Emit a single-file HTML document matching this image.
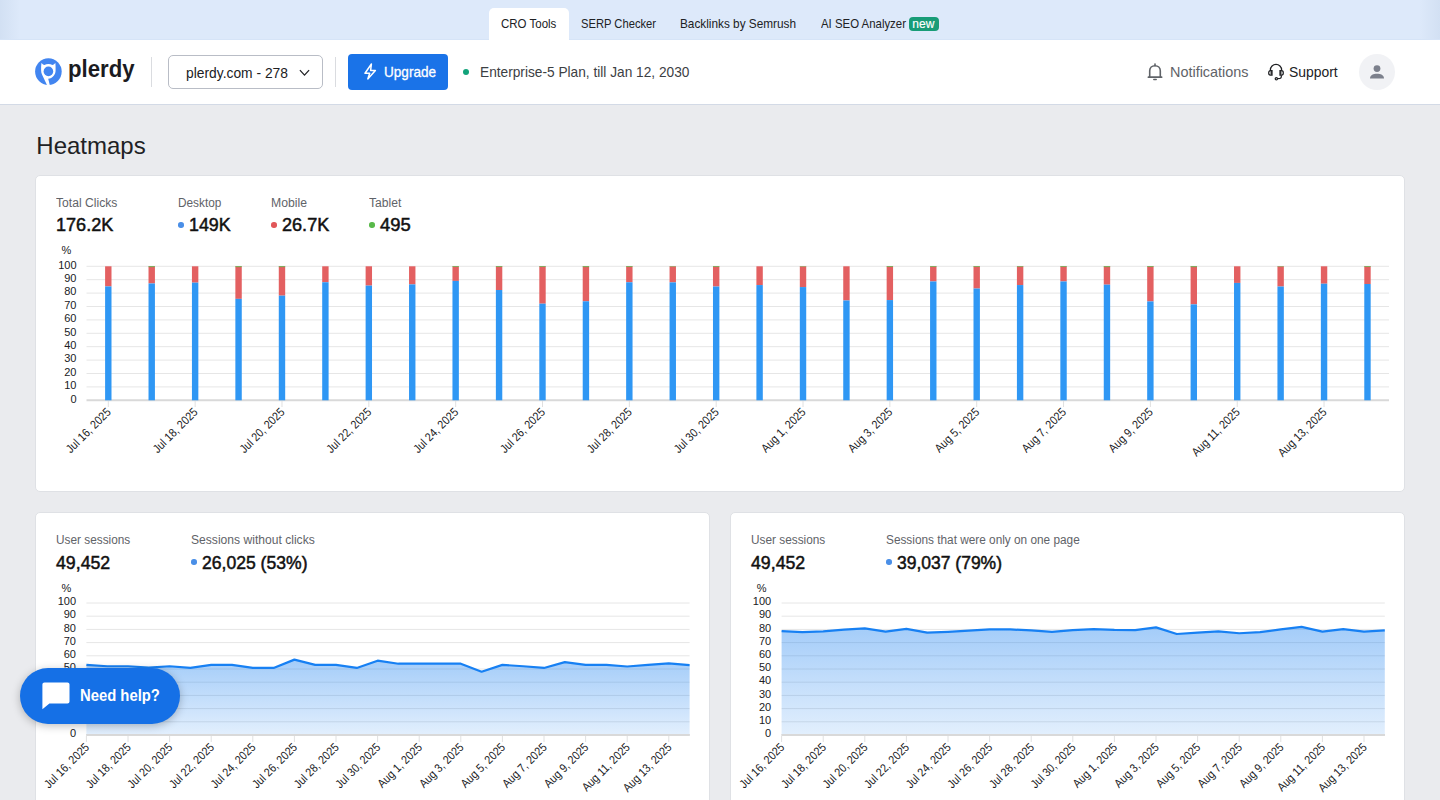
<!DOCTYPE html><html><head><meta charset="utf-8"><style>
*{margin:0;padding:0;box-sizing:border-box}
html,body{width:1440px;height:800px;overflow:hidden;background:#eaebee;font-family:"Liberation Sans",sans-serif}
.abs{position:absolute}
.t{position:absolute;white-space:nowrap;line-height:1;transform-origin:0 0}
.ax{font-family:"Liberation Sans",sans-serif;font-size:11px;fill:#202124}
.xl{font-family:"Liberation Sans",sans-serif;font-size:12px;fill:#202124}
</style></head><body>
<div class="abs" style="left:0;top:0;width:1440px;height:40px;background:linear-gradient(90deg,#d2e0f3 0,#dde9fa 20px,#dde9fa 1420px,#d2e0f3 1440px);border-bottom:1px solid #d6e4f7"></div>
<div class="abs" style="left:489px;top:8px;width:80px;height:32px;background:#fff;border-radius:5px 5px 0 0"></div>
<div class="abs" style="left:909px;top:17px;width:30px;height:14px;background:#189c77;border-radius:4px"></div>
<div class="abs" style="left:0;top:40px;width:1440px;height:65px;background:#fff;border-bottom:1px solid #d3dae6"></div>
<svg class="abs" style="left:34px;top:57px" width="29" height="29" viewBox="0 0 29 29">
<circle cx="14.4" cy="14.6" r="13.3" fill="#4285f0"/>
<path d="M7.4 6.0 C8.6 7.2 9.6 7.9 10.4 7.9 C11.6 7.3 12.8 7.0 14.4 7.0 C16.0 7.0 17.2 7.3 18.4 7.9 C19.2 7.9 20.2 7.2 21.4 6.0 C21.6 8.2 21.6 10.5 21.6 13.2 C21.6 17.8 18.6 21.2 14.2 21.8 L15.9 28.5 L13.2 28.6 L8.0 17.4 C7.4 16.2 7.1 14.8 7.1 13.2 C7.1 10.5 7.1 8.2 7.4 6.0 Z" fill="#fff"/>
<circle cx="14.4" cy="14.4" r="4.8" fill="#4285f0"/>
</svg>
<div class="abs" style="left:151px;top:57px;width:1px;height:30px;background:#dadce0"></div>
<div class="abs" style="left:168px;top:55px;width:155px;height:34px;border:1px solid #b9bdc6;border-radius:5px;background:#fff"></div>
<svg class="abs" style="left:298px;top:67px" width="13" height="10" viewBox="0 0 13 10"><path d="M1.9 3.2 L6.5 8.2 L11.1 3.2" fill="none" stroke="#202124" stroke-width="1.25"/></svg>
<div class="abs" style="left:335px;top:57px;width:1px;height:30px;background:#dadce0"></div>
<div class="abs" style="left:348px;top:54px;width:100px;height:36px;background:#1a73e8;border-radius:4px"></div>
<svg class="abs" style="left:361px;top:62px" width="18" height="20" viewBox="0 0 18 20"><path d="M10.4 2.0 L4.0 11.3 H8.7 L6.8 16.9 L14.4 8.5 H9.6 Z" fill="none" stroke="#fff" stroke-width="1.5" stroke-linejoin="round"/></svg>
<div class="abs" style="left:463px;top:69px;width:6px;height:6px;border-radius:50%;background:#12a37a"></div>
<svg class="abs" style="left:1146px;top:62px" width="18" height="20" viewBox="0 0 18 20"><path d="M3.7 15.0 V8.8 C3.7 5.8 6.0 3.7 9 3.7 C12.0 3.7 14.3 5.8 14.3 8.8 V15.0" fill="none" stroke="#5f6368" stroke-width="1.6"/><path d="M2.4 15.2 H15.6" stroke="#5f6368" stroke-width="1.7" stroke-linecap="round"/><path d="M9 2.0 V3.6" stroke="#5f6368" stroke-width="1.6" stroke-linecap="round"/><path d="M7.8 17.4 H10.2" stroke="#5f6368" stroke-width="1.5" stroke-linecap="round"/></svg>
<svg class="abs" style="left:1266px;top:62px" width="20" height="20" viewBox="0 0 20 20"><g fill="none" stroke="#202124" stroke-width="1.25"><path d="M4.4 8.6 V7.9 A5.6 5.6 0 0 1 15.6 7.9 V8.6"/><path d="M6.0 8.7 H4.3 C3.3 8.7 2.7 9.7 2.7 10.9 C2.7 12.1 3.3 13.0 4.3 13.0 H6.0 Z"/><path d="M14.0 8.7 H15.7 C16.7 8.7 17.3 9.7 17.3 10.9 C17.3 12.1 16.7 13.0 15.7 13.0 H14.0 Z"/><path d="M5.2 8.9 V12.8 M14.8 8.9 V12.8"/><path d="M15.3 13.2 V14.9 C15.3 15.7 14.8 16.1 14.0 16.3 L11.6 16.6"/><circle cx="10.35" cy="16.65" r="1.15"/></g></svg>
<div class="abs" style="left:1359px;top:54px;width:36px;height:36px;border-radius:50%;background:#f1f2f5"></div>
<svg class="abs" style="left:1367px;top:62px" width="20" height="20" viewBox="0 0 20 20"><circle cx="10" cy="6.6" r="3.4" fill="#7c808c"/><path d="M3 16.5 C3 13 6.5 11.8 10 11.8 C13.5 11.8 17 13 17 16.5 Z" fill="#7c808c"/></svg>
<div class="abs" style="left:35px;top:175px;width:1370px;height:317px;background:#fff;border:1px solid #dfe1e5;border-radius:5px"></div>
<div class="abs" style="left:35px;top:512px;width:675px;height:320px;background:#fff;border:1px solid #dfe1e5;border-radius:5px"></div>
<div class="abs" style="left:730px;top:512px;width:675px;height:320px;background:#fff;border:1px solid #dfe1e5;border-radius:5px"></div>
<div class="abs" style="left:178.25px;top:222.25px;width:5.5px;height:5.5px;border-radius:50%;background:#4a8fe7"></div>
<div class="abs" style="left:271.25px;top:222.25px;width:5.5px;height:5.5px;border-radius:50%;background:#e15759"></div>
<div class="abs" style="left:369.25px;top:222.25px;width:5.5px;height:5.5px;border-radius:50%;background:#59b94a"></div>
<div class="abs" style="left:191.0px;top:559.25px;width:5.5px;height:5.5px;border-radius:50%;background:#4a8fe7"></div>
<div class="abs" style="left:886.0px;top:559.25px;width:5.5px;height:5.5px;border-radius:50%;background:#4a8fe7"></div>
<svg class="abs" style="left:0;top:0" width="1440" height="800" viewBox="0 0 1440 800"><line x1="86.5" x2="1389" y1="400.30" y2="400.30" stroke="#d9d9d9" stroke-width="2"/><text x="76.5" y="402.50" text-anchor="end" class="ax">0</text><line x1="86.5" x2="1389" y1="386.90" y2="386.90" stroke="#e6e6e6" stroke-width="1"/><text x="76.5" y="389.10" text-anchor="end" class="ax">10</text><line x1="86.5" x2="1389" y1="373.50" y2="373.50" stroke="#e6e6e6" stroke-width="1"/><text x="76.5" y="375.70" text-anchor="end" class="ax">20</text><line x1="86.5" x2="1389" y1="360.10" y2="360.10" stroke="#e6e6e6" stroke-width="1"/><text x="76.5" y="362.30" text-anchor="end" class="ax">30</text><line x1="86.5" x2="1389" y1="346.70" y2="346.70" stroke="#e6e6e6" stroke-width="1"/><text x="76.5" y="348.90" text-anchor="end" class="ax">40</text><line x1="86.5" x2="1389" y1="333.30" y2="333.30" stroke="#e6e6e6" stroke-width="1"/><text x="76.5" y="335.50" text-anchor="end" class="ax">50</text><line x1="86.5" x2="1389" y1="319.90" y2="319.90" stroke="#e6e6e6" stroke-width="1"/><text x="76.5" y="322.10" text-anchor="end" class="ax">60</text><line x1="86.5" x2="1389" y1="306.50" y2="306.50" stroke="#e6e6e6" stroke-width="1"/><text x="76.5" y="308.70" text-anchor="end" class="ax">70</text><line x1="86.5" x2="1389" y1="293.10" y2="293.10" stroke="#e6e6e6" stroke-width="1"/><text x="76.5" y="295.30" text-anchor="end" class="ax">80</text><line x1="86.5" x2="1389" y1="279.70" y2="279.70" stroke="#e6e6e6" stroke-width="1"/><text x="76.5" y="281.90" text-anchor="end" class="ax">90</text><line x1="86.5" x2="1389" y1="266.30" y2="266.30" stroke="#e6e6e6" stroke-width="1"/><text x="76.5" y="268.50" text-anchor="end" class="ax">100</text><text x="61.5" y="254" class="ax">%</text><rect x="105.10" y="266.30" width="6.4" height="20.10" fill="#e15759" fill-opacity="0.95"/><rect x="105.10" y="286.40" width="6.4" height="113.90" fill="#2f97f4"/><rect x="148.52" y="266.30" width="6.4" height="17.15" fill="#e15759" fill-opacity="0.95"/><rect x="148.52" y="266.30" width="6.4" height="0.80" fill="#59b94a"/><rect x="148.52" y="283.45" width="6.4" height="116.85" fill="#2f97f4"/><rect x="191.94" y="266.30" width="6.4" height="16.35" fill="#e15759" fill-opacity="0.95"/><rect x="191.94" y="282.65" width="6.4" height="117.65" fill="#2f97f4"/><rect x="235.36" y="266.30" width="6.4" height="32.56" fill="#e15759" fill-opacity="0.95"/><rect x="235.36" y="266.30" width="6.4" height="0.80" fill="#59b94a"/><rect x="235.36" y="298.86" width="6.4" height="101.44" fill="#2f97f4"/><rect x="278.78" y="266.30" width="6.4" height="29.35" fill="#e15759" fill-opacity="0.95"/><rect x="278.78" y="266.30" width="6.4" height="0.80" fill="#59b94a"/><rect x="278.78" y="295.65" width="6.4" height="104.65" fill="#2f97f4"/><rect x="322.20" y="266.30" width="6.4" height="15.95" fill="#e15759" fill-opacity="0.95"/><rect x="322.20" y="282.25" width="6.4" height="118.05" fill="#2f97f4"/><rect x="365.62" y="266.30" width="6.4" height="19.30" fill="#e15759" fill-opacity="0.95"/><rect x="365.62" y="285.60" width="6.4" height="114.70" fill="#2f97f4"/><rect x="409.04" y="266.30" width="6.4" height="18.09" fill="#e15759" fill-opacity="0.95"/><rect x="409.04" y="284.39" width="6.4" height="115.91" fill="#2f97f4"/><rect x="452.46" y="266.30" width="6.4" height="14.61" fill="#e15759" fill-opacity="0.95"/><rect x="452.46" y="266.30" width="6.4" height="0.67" fill="#59b94a"/><rect x="452.46" y="280.91" width="6.4" height="119.39" fill="#2f97f4"/><rect x="495.88" y="266.30" width="6.4" height="23.72" fill="#e15759" fill-opacity="0.95"/><rect x="495.88" y="266.30" width="6.4" height="0.67" fill="#59b94a"/><rect x="495.88" y="290.02" width="6.4" height="110.28" fill="#2f97f4"/><rect x="539.30" y="266.30" width="6.4" height="37.39" fill="#e15759" fill-opacity="0.95"/><rect x="539.30" y="266.30" width="6.4" height="0.67" fill="#59b94a"/><rect x="539.30" y="303.69" width="6.4" height="96.61" fill="#2f97f4"/><rect x="582.72" y="266.30" width="6.4" height="34.97" fill="#e15759" fill-opacity="0.95"/><rect x="582.72" y="266.30" width="6.4" height="0.80" fill="#59b94a"/><rect x="582.72" y="301.27" width="6.4" height="99.03" fill="#2f97f4"/><rect x="626.14" y="266.30" width="6.4" height="15.95" fill="#e15759" fill-opacity="0.95"/><rect x="626.14" y="266.30" width="6.4" height="0.67" fill="#59b94a"/><rect x="626.14" y="282.25" width="6.4" height="118.05" fill="#2f97f4"/><rect x="669.56" y="266.30" width="6.4" height="16.08" fill="#e15759" fill-opacity="0.95"/><rect x="669.56" y="266.30" width="6.4" height="0.40" fill="#59b94a"/><rect x="669.56" y="282.38" width="6.4" height="117.92" fill="#2f97f4"/><rect x="712.98" y="266.30" width="6.4" height="20.23" fill="#e15759" fill-opacity="0.95"/><rect x="712.98" y="266.30" width="6.4" height="0.67" fill="#59b94a"/><rect x="712.98" y="286.53" width="6.4" height="113.77" fill="#2f97f4"/><rect x="756.40" y="266.30" width="6.4" height="18.76" fill="#e15759" fill-opacity="0.95"/><rect x="756.40" y="285.06" width="6.4" height="115.24" fill="#2f97f4"/><rect x="799.82" y="266.30" width="6.4" height="20.77" fill="#e15759" fill-opacity="0.95"/><rect x="799.82" y="266.30" width="6.4" height="0.40" fill="#59b94a"/><rect x="799.82" y="287.07" width="6.4" height="113.23" fill="#2f97f4"/><rect x="843.24" y="266.30" width="6.4" height="34.17" fill="#e15759" fill-opacity="0.95"/><rect x="843.24" y="300.47" width="6.4" height="99.83" fill="#2f97f4"/><rect x="886.66" y="266.30" width="6.4" height="33.77" fill="#e15759" fill-opacity="0.95"/><rect x="886.66" y="266.30" width="6.4" height="0.67" fill="#59b94a"/><rect x="886.66" y="300.07" width="6.4" height="100.23" fill="#2f97f4"/><rect x="930.08" y="266.30" width="6.4" height="15.14" fill="#e15759" fill-opacity="0.95"/><rect x="930.08" y="266.30" width="6.4" height="0.67" fill="#59b94a"/><rect x="930.08" y="281.44" width="6.4" height="118.86" fill="#2f97f4"/><rect x="973.50" y="266.30" width="6.4" height="22.24" fill="#e15759" fill-opacity="0.95"/><rect x="973.50" y="266.30" width="6.4" height="0.67" fill="#59b94a"/><rect x="973.50" y="288.54" width="6.4" height="111.76" fill="#2f97f4"/><rect x="1016.92" y="266.30" width="6.4" height="18.76" fill="#e15759" fill-opacity="0.95"/><rect x="1016.92" y="266.30" width="6.4" height="0.54" fill="#59b94a"/><rect x="1016.92" y="285.06" width="6.4" height="115.24" fill="#2f97f4"/><rect x="1060.34" y="266.30" width="6.4" height="15.14" fill="#e15759" fill-opacity="0.95"/><rect x="1060.34" y="266.30" width="6.4" height="0.67" fill="#59b94a"/><rect x="1060.34" y="281.44" width="6.4" height="118.86" fill="#2f97f4"/><rect x="1103.76" y="266.30" width="6.4" height="18.36" fill="#e15759" fill-opacity="0.95"/><rect x="1103.76" y="266.30" width="6.4" height="0.80" fill="#59b94a"/><rect x="1103.76" y="284.66" width="6.4" height="115.64" fill="#2f97f4"/><rect x="1147.18" y="266.30" width="6.4" height="35.11" fill="#e15759" fill-opacity="0.95"/><rect x="1147.18" y="266.30" width="6.4" height="0.67" fill="#59b94a"/><rect x="1147.18" y="301.41" width="6.4" height="98.89" fill="#2f97f4"/><rect x="1190.60" y="266.30" width="6.4" height="38.06" fill="#e15759" fill-opacity="0.95"/><rect x="1190.60" y="266.30" width="6.4" height="0.80" fill="#59b94a"/><rect x="1190.60" y="304.36" width="6.4" height="95.94" fill="#2f97f4"/><rect x="1234.02" y="266.30" width="6.4" height="16.62" fill="#e15759" fill-opacity="0.95"/><rect x="1234.02" y="282.92" width="6.4" height="117.38" fill="#2f97f4"/><rect x="1277.44" y="266.30" width="6.4" height="20.23" fill="#e15759" fill-opacity="0.95"/><rect x="1277.44" y="266.30" width="6.4" height="0.40" fill="#59b94a"/><rect x="1277.44" y="286.53" width="6.4" height="113.77" fill="#2f97f4"/><rect x="1320.86" y="266.30" width="6.4" height="17.42" fill="#e15759" fill-opacity="0.95"/><rect x="1320.86" y="283.72" width="6.4" height="116.58" fill="#2f97f4"/><rect x="1364.28" y="266.30" width="6.4" height="17.69" fill="#e15759" fill-opacity="0.95"/><rect x="1364.28" y="266.30" width="6.4" height="0.67" fill="#59b94a"/><rect x="1364.28" y="283.99" width="6.4" height="116.31" fill="#2f97f4"/><line x1="108.30" x2="108.30" y1="401" y2="407" stroke="#e0e0e0" stroke-width="1"/><text class="xl" text-anchor="end" textLength="57.87" lengthAdjust="spacingAndGlyphs" transform="translate(111.70,412.80) rotate(-45)">Jul 16, 2025</text><line x1="195.14" x2="195.14" y1="401" y2="407" stroke="#e0e0e0" stroke-width="1"/><text class="xl" text-anchor="end" textLength="57.87" lengthAdjust="spacingAndGlyphs" transform="translate(198.54,412.80) rotate(-45)">Jul 18, 2025</text><line x1="281.98" x2="281.98" y1="401" y2="407" stroke="#e0e0e0" stroke-width="1"/><text class="xl" text-anchor="end" textLength="57.87" lengthAdjust="spacingAndGlyphs" transform="translate(285.38,412.80) rotate(-45)">Jul 20, 2025</text><line x1="368.82" x2="368.82" y1="401" y2="407" stroke="#e0e0e0" stroke-width="1"/><text class="xl" text-anchor="end" textLength="57.87" lengthAdjust="spacingAndGlyphs" transform="translate(372.22,412.80) rotate(-45)">Jul 22, 2025</text><line x1="455.66" x2="455.66" y1="401" y2="407" stroke="#e0e0e0" stroke-width="1"/><text class="xl" text-anchor="end" textLength="57.87" lengthAdjust="spacingAndGlyphs" transform="translate(459.06,412.80) rotate(-45)">Jul 24, 2025</text><line x1="542.50" x2="542.50" y1="401" y2="407" stroke="#e0e0e0" stroke-width="1"/><text class="xl" text-anchor="end" textLength="57.87" lengthAdjust="spacingAndGlyphs" transform="translate(545.90,412.80) rotate(-45)">Jul 26, 2025</text><line x1="629.34" x2="629.34" y1="401" y2="407" stroke="#e0e0e0" stroke-width="1"/><text class="xl" text-anchor="end" textLength="57.87" lengthAdjust="spacingAndGlyphs" transform="translate(632.74,412.80) rotate(-45)">Jul 28, 2025</text><line x1="716.18" x2="716.18" y1="401" y2="407" stroke="#e0e0e0" stroke-width="1"/><text class="xl" text-anchor="end" textLength="57.87" lengthAdjust="spacingAndGlyphs" transform="translate(719.58,412.80) rotate(-45)">Jul 30, 2025</text><line x1="803.02" x2="803.02" y1="401" y2="407" stroke="#e0e0e0" stroke-width="1"/><text class="xl" text-anchor="end" textLength="57.28" lengthAdjust="spacingAndGlyphs" transform="translate(806.42,412.80) rotate(-45)">Aug 1, 2025</text><line x1="889.86" x2="889.86" y1="401" y2="407" stroke="#e0e0e0" stroke-width="1"/><text class="xl" text-anchor="end" textLength="57.28" lengthAdjust="spacingAndGlyphs" transform="translate(893.26,412.80) rotate(-45)">Aug 3, 2025</text><line x1="976.70" x2="976.70" y1="401" y2="407" stroke="#e0e0e0" stroke-width="1"/><text class="xl" text-anchor="end" textLength="57.28" lengthAdjust="spacingAndGlyphs" transform="translate(980.10,412.80) rotate(-45)">Aug 5, 2025</text><line x1="1063.54" x2="1063.54" y1="401" y2="407" stroke="#e0e0e0" stroke-width="1"/><text class="xl" text-anchor="end" textLength="57.28" lengthAdjust="spacingAndGlyphs" transform="translate(1066.94,412.80) rotate(-45)">Aug 7, 2025</text><line x1="1150.38" x2="1150.38" y1="401" y2="407" stroke="#e0e0e0" stroke-width="1"/><text class="xl" text-anchor="end" textLength="57.28" lengthAdjust="spacingAndGlyphs" transform="translate(1153.78,412.80) rotate(-45)">Aug 9, 2025</text><line x1="1237.22" x2="1237.22" y1="401" y2="407" stroke="#e0e0e0" stroke-width="1"/><text class="xl" text-anchor="end" textLength="62.40" lengthAdjust="spacingAndGlyphs" transform="translate(1240.62,412.80) rotate(-45)">Aug 11, 2025</text><line x1="1324.06" x2="1324.06" y1="401" y2="407" stroke="#e0e0e0" stroke-width="1"/><text class="xl" text-anchor="end" textLength="63.19" lengthAdjust="spacingAndGlyphs" transform="translate(1327.46,412.80) rotate(-45)">Aug 13, 2025</text></svg>
<svg class="abs" style="left:0;top:0" width="1440" height="800" viewBox="0 0 1440 800"><defs><linearGradient id="g1" x1="0" y1="0" x2="0" y2="1"><stop offset="0" stop-color="#1a80f0" stop-opacity="0.40"/><stop offset="1" stop-color="#1a80f0" stop-opacity="0.125"/></linearGradient></defs><line x1="86.40" x2="689.60" y1="735.00" y2="735.00" stroke="#d9d9d9" stroke-width="2"/><text x="76.00" y="737.20" text-anchor="end" class="ax">0</text><line x1="86.40" x2="689.60" y1="721.80" y2="721.80" stroke="#e6e6e6" stroke-width="1"/><text x="76.00" y="724.00" text-anchor="end" class="ax">10</text><line x1="86.40" x2="689.60" y1="708.60" y2="708.60" stroke="#e6e6e6" stroke-width="1"/><text x="76.00" y="710.80" text-anchor="end" class="ax">20</text><line x1="86.40" x2="689.60" y1="695.40" y2="695.40" stroke="#e6e6e6" stroke-width="1"/><text x="76.00" y="697.60" text-anchor="end" class="ax">30</text><line x1="86.40" x2="689.60" y1="682.20" y2="682.20" stroke="#e6e6e6" stroke-width="1"/><text x="76.00" y="684.40" text-anchor="end" class="ax">40</text><line x1="86.40" x2="689.60" y1="669.00" y2="669.00" stroke="#e6e6e6" stroke-width="1"/><text x="76.00" y="671.20" text-anchor="end" class="ax">50</text><line x1="86.40" x2="689.60" y1="655.80" y2="655.80" stroke="#e6e6e6" stroke-width="1"/><text x="76.00" y="658.00" text-anchor="end" class="ax">60</text><line x1="86.40" x2="689.60" y1="642.60" y2="642.60" stroke="#e6e6e6" stroke-width="1"/><text x="76.00" y="644.80" text-anchor="end" class="ax">70</text><line x1="86.40" x2="689.60" y1="629.40" y2="629.40" stroke="#e6e6e6" stroke-width="1"/><text x="76.00" y="631.60" text-anchor="end" class="ax">80</text><line x1="86.40" x2="689.60" y1="616.20" y2="616.20" stroke="#e6e6e6" stroke-width="1"/><text x="76.00" y="618.40" text-anchor="end" class="ax">90</text><line x1="86.40" x2="689.60" y1="603.00" y2="603.00" stroke="#e6e6e6" stroke-width="1"/><text x="76.00" y="605.20" text-anchor="end" class="ax">100</text><text x="61.50" y="591.5" class="ax">%</text><path d="M86.40,664.91 L107.20,666.23 L128.00,666.23 L148.80,667.68 L169.60,666.23 L190.40,667.94 L211.20,664.91 L232.00,664.91 L252.80,667.94 L273.60,667.94 L294.40,659.63 L315.20,664.91 L336.00,664.91 L356.80,667.94 L377.60,660.68 L398.40,663.72 L419.20,663.72 L440.00,663.72 L460.80,663.72 L481.60,671.77 L502.40,664.91 L523.20,666.23 L544.00,667.94 L564.80,662.14 L585.60,664.91 L606.40,664.91 L627.20,666.49 L648.00,664.91 L668.80,663.46 L689.60,665.17 L689.60,735.00 L86.40,735.00 Z" fill="url(#g1)"/><line x1="86.40" x2="689.60" y1="735.00" y2="735.00" stroke="#d9d9d9" stroke-width="2"/><path d="M86.40,664.91 L107.20,666.23 L128.00,666.23 L148.80,667.68 L169.60,666.23 L190.40,667.94 L211.20,664.91 L232.00,664.91 L252.80,667.94 L273.60,667.94 L294.40,659.63 L315.20,664.91 L336.00,664.91 L356.80,667.94 L377.60,660.68 L398.40,663.72 L419.20,663.72 L440.00,663.72 L460.80,663.72 L481.60,671.77 L502.40,664.91 L523.20,666.23 L544.00,667.94 L564.80,662.14 L585.60,664.91 L606.40,664.91 L627.20,666.49 L648.00,664.91 L668.80,663.46 L689.60,665.17" fill="none" stroke="#1780f3" stroke-width="2.2" stroke-linejoin="round"/><line x1="86.40" x2="86.40" y1="736" y2="742" stroke="#e0e0e0" stroke-width="1"/><text class="xl" text-anchor="end" textLength="57.87" lengthAdjust="spacingAndGlyphs" transform="translate(90.00,748.00) rotate(-45)">Jul 16, 2025</text><line x1="128.00" x2="128.00" y1="736" y2="742" stroke="#e0e0e0" stroke-width="1"/><text class="xl" text-anchor="end" textLength="57.87" lengthAdjust="spacingAndGlyphs" transform="translate(131.60,748.00) rotate(-45)">Jul 18, 2025</text><line x1="169.60" x2="169.60" y1="736" y2="742" stroke="#e0e0e0" stroke-width="1"/><text class="xl" text-anchor="end" textLength="57.87" lengthAdjust="spacingAndGlyphs" transform="translate(173.20,748.00) rotate(-45)">Jul 20, 2025</text><line x1="211.20" x2="211.20" y1="736" y2="742" stroke="#e0e0e0" stroke-width="1"/><text class="xl" text-anchor="end" textLength="57.87" lengthAdjust="spacingAndGlyphs" transform="translate(214.80,748.00) rotate(-45)">Jul 22, 2025</text><line x1="252.80" x2="252.80" y1="736" y2="742" stroke="#e0e0e0" stroke-width="1"/><text class="xl" text-anchor="end" textLength="57.87" lengthAdjust="spacingAndGlyphs" transform="translate(256.40,748.00) rotate(-45)">Jul 24, 2025</text><line x1="294.40" x2="294.40" y1="736" y2="742" stroke="#e0e0e0" stroke-width="1"/><text class="xl" text-anchor="end" textLength="57.87" lengthAdjust="spacingAndGlyphs" transform="translate(298.00,748.00) rotate(-45)">Jul 26, 2025</text><line x1="336.00" x2="336.00" y1="736" y2="742" stroke="#e0e0e0" stroke-width="1"/><text class="xl" text-anchor="end" textLength="57.87" lengthAdjust="spacingAndGlyphs" transform="translate(339.60,748.00) rotate(-45)">Jul 28, 2025</text><line x1="377.60" x2="377.60" y1="736" y2="742" stroke="#e0e0e0" stroke-width="1"/><text class="xl" text-anchor="end" textLength="57.87" lengthAdjust="spacingAndGlyphs" transform="translate(381.20,748.00) rotate(-45)">Jul 30, 2025</text><line x1="419.20" x2="419.20" y1="736" y2="742" stroke="#e0e0e0" stroke-width="1"/><text class="xl" text-anchor="end" textLength="57.28" lengthAdjust="spacingAndGlyphs" transform="translate(422.80,748.00) rotate(-45)">Aug 1, 2025</text><line x1="460.80" x2="460.80" y1="736" y2="742" stroke="#e0e0e0" stroke-width="1"/><text class="xl" text-anchor="end" textLength="57.28" lengthAdjust="spacingAndGlyphs" transform="translate(464.40,748.00) rotate(-45)">Aug 3, 2025</text><line x1="502.40" x2="502.40" y1="736" y2="742" stroke="#e0e0e0" stroke-width="1"/><text class="xl" text-anchor="end" textLength="57.28" lengthAdjust="spacingAndGlyphs" transform="translate(506.00,748.00) rotate(-45)">Aug 5, 2025</text><line x1="544.00" x2="544.00" y1="736" y2="742" stroke="#e0e0e0" stroke-width="1"/><text class="xl" text-anchor="end" textLength="57.28" lengthAdjust="spacingAndGlyphs" transform="translate(547.60,748.00) rotate(-45)">Aug 7, 2025</text><line x1="585.60" x2="585.60" y1="736" y2="742" stroke="#e0e0e0" stroke-width="1"/><text class="xl" text-anchor="end" textLength="57.28" lengthAdjust="spacingAndGlyphs" transform="translate(589.20,748.00) rotate(-45)">Aug 9, 2025</text><line x1="627.20" x2="627.20" y1="736" y2="742" stroke="#e0e0e0" stroke-width="1"/><text class="xl" text-anchor="end" textLength="62.40" lengthAdjust="spacingAndGlyphs" transform="translate(630.80,748.00) rotate(-45)">Aug 11, 2025</text><line x1="668.80" x2="668.80" y1="736" y2="742" stroke="#e0e0e0" stroke-width="1"/><text class="xl" text-anchor="end" textLength="63.19" lengthAdjust="spacingAndGlyphs" transform="translate(672.40,748.00) rotate(-45)">Aug 13, 2025</text></svg>
<svg class="abs" style="left:0;top:0" width="1440" height="800" viewBox="0 0 1440 800"><defs><linearGradient id="g2" x1="0" y1="0" x2="0" y2="1"><stop offset="0" stop-color="#1a80f0" stop-opacity="0.40"/><stop offset="1" stop-color="#1a80f0" stop-opacity="0.125"/></linearGradient></defs><line x1="781.60" x2="1384.80" y1="735.00" y2="735.00" stroke="#d9d9d9" stroke-width="2"/><text x="771.20" y="737.20" text-anchor="end" class="ax">0</text><line x1="781.60" x2="1384.80" y1="721.80" y2="721.80" stroke="#e6e6e6" stroke-width="1"/><text x="771.20" y="724.00" text-anchor="end" class="ax">10</text><line x1="781.60" x2="1384.80" y1="708.60" y2="708.60" stroke="#e6e6e6" stroke-width="1"/><text x="771.20" y="710.80" text-anchor="end" class="ax">20</text><line x1="781.60" x2="1384.80" y1="695.40" y2="695.40" stroke="#e6e6e6" stroke-width="1"/><text x="771.20" y="697.60" text-anchor="end" class="ax">30</text><line x1="781.60" x2="1384.80" y1="682.20" y2="682.20" stroke="#e6e6e6" stroke-width="1"/><text x="771.20" y="684.40" text-anchor="end" class="ax">40</text><line x1="781.60" x2="1384.80" y1="669.00" y2="669.00" stroke="#e6e6e6" stroke-width="1"/><text x="771.20" y="671.20" text-anchor="end" class="ax">50</text><line x1="781.60" x2="1384.80" y1="655.80" y2="655.80" stroke="#e6e6e6" stroke-width="1"/><text x="771.20" y="658.00" text-anchor="end" class="ax">60</text><line x1="781.60" x2="1384.80" y1="642.60" y2="642.60" stroke="#e6e6e6" stroke-width="1"/><text x="771.20" y="644.80" text-anchor="end" class="ax">70</text><line x1="781.60" x2="1384.80" y1="629.40" y2="629.40" stroke="#e6e6e6" stroke-width="1"/><text x="771.20" y="631.60" text-anchor="end" class="ax">80</text><line x1="781.60" x2="1384.80" y1="616.20" y2="616.20" stroke="#e6e6e6" stroke-width="1"/><text x="771.20" y="618.40" text-anchor="end" class="ax">90</text><line x1="781.60" x2="1384.80" y1="603.00" y2="603.00" stroke="#e6e6e6" stroke-width="1"/><text x="771.20" y="605.20" text-anchor="end" class="ax">100</text><text x="756.70" y="591.5" class="ax">%</text><path d="M781.60,631.05 L802.40,632.17 L823.20,631.38 L844.00,629.66 L864.80,628.34 L885.60,631.64 L906.40,628.87 L927.20,632.70 L948.00,631.91 L968.80,630.72 L989.60,629.40 L1010.40,629.40 L1031.20,630.46 L1052.00,631.91 L1072.80,630.19 L1093.60,629.14 L1114.40,629.93 L1135.20,630.19 L1156.00,627.42 L1176.80,634.02 L1197.60,632.70 L1218.40,631.38 L1239.20,633.23 L1260.00,632.17 L1280.80,629.40 L1301.60,626.89 L1322.40,631.64 L1343.20,629.14 L1364.00,631.64 L1384.80,630.46 L1384.80,735.00 L781.60,735.00 Z" fill="url(#g2)"/><line x1="781.60" x2="1384.80" y1="735.00" y2="735.00" stroke="#d9d9d9" stroke-width="2"/><path d="M781.60,631.05 L802.40,632.17 L823.20,631.38 L844.00,629.66 L864.80,628.34 L885.60,631.64 L906.40,628.87 L927.20,632.70 L948.00,631.91 L968.80,630.72 L989.60,629.40 L1010.40,629.40 L1031.20,630.46 L1052.00,631.91 L1072.80,630.19 L1093.60,629.14 L1114.40,629.93 L1135.20,630.19 L1156.00,627.42 L1176.80,634.02 L1197.60,632.70 L1218.40,631.38 L1239.20,633.23 L1260.00,632.17 L1280.80,629.40 L1301.60,626.89 L1322.40,631.64 L1343.20,629.14 L1364.00,631.64 L1384.80,630.46" fill="none" stroke="#1780f3" stroke-width="2.2" stroke-linejoin="round"/><line x1="781.60" x2="781.60" y1="736" y2="742" stroke="#e0e0e0" stroke-width="1"/><text class="xl" text-anchor="end" textLength="57.87" lengthAdjust="spacingAndGlyphs" transform="translate(785.20,748.00) rotate(-45)">Jul 16, 2025</text><line x1="823.20" x2="823.20" y1="736" y2="742" stroke="#e0e0e0" stroke-width="1"/><text class="xl" text-anchor="end" textLength="57.87" lengthAdjust="spacingAndGlyphs" transform="translate(826.80,748.00) rotate(-45)">Jul 18, 2025</text><line x1="864.80" x2="864.80" y1="736" y2="742" stroke="#e0e0e0" stroke-width="1"/><text class="xl" text-anchor="end" textLength="57.87" lengthAdjust="spacingAndGlyphs" transform="translate(868.40,748.00) rotate(-45)">Jul 20, 2025</text><line x1="906.40" x2="906.40" y1="736" y2="742" stroke="#e0e0e0" stroke-width="1"/><text class="xl" text-anchor="end" textLength="57.87" lengthAdjust="spacingAndGlyphs" transform="translate(910.00,748.00) rotate(-45)">Jul 22, 2025</text><line x1="948.00" x2="948.00" y1="736" y2="742" stroke="#e0e0e0" stroke-width="1"/><text class="xl" text-anchor="end" textLength="57.87" lengthAdjust="spacingAndGlyphs" transform="translate(951.60,748.00) rotate(-45)">Jul 24, 2025</text><line x1="989.60" x2="989.60" y1="736" y2="742" stroke="#e0e0e0" stroke-width="1"/><text class="xl" text-anchor="end" textLength="57.87" lengthAdjust="spacingAndGlyphs" transform="translate(993.20,748.00) rotate(-45)">Jul 26, 2025</text><line x1="1031.20" x2="1031.20" y1="736" y2="742" stroke="#e0e0e0" stroke-width="1"/><text class="xl" text-anchor="end" textLength="57.87" lengthAdjust="spacingAndGlyphs" transform="translate(1034.80,748.00) rotate(-45)">Jul 28, 2025</text><line x1="1072.80" x2="1072.80" y1="736" y2="742" stroke="#e0e0e0" stroke-width="1"/><text class="xl" text-anchor="end" textLength="57.87" lengthAdjust="spacingAndGlyphs" transform="translate(1076.40,748.00) rotate(-45)">Jul 30, 2025</text><line x1="1114.40" x2="1114.40" y1="736" y2="742" stroke="#e0e0e0" stroke-width="1"/><text class="xl" text-anchor="end" textLength="57.28" lengthAdjust="spacingAndGlyphs" transform="translate(1118.00,748.00) rotate(-45)">Aug 1, 2025</text><line x1="1156.00" x2="1156.00" y1="736" y2="742" stroke="#e0e0e0" stroke-width="1"/><text class="xl" text-anchor="end" textLength="57.28" lengthAdjust="spacingAndGlyphs" transform="translate(1159.60,748.00) rotate(-45)">Aug 3, 2025</text><line x1="1197.60" x2="1197.60" y1="736" y2="742" stroke="#e0e0e0" stroke-width="1"/><text class="xl" text-anchor="end" textLength="57.28" lengthAdjust="spacingAndGlyphs" transform="translate(1201.20,748.00) rotate(-45)">Aug 5, 2025</text><line x1="1239.20" x2="1239.20" y1="736" y2="742" stroke="#e0e0e0" stroke-width="1"/><text class="xl" text-anchor="end" textLength="57.28" lengthAdjust="spacingAndGlyphs" transform="translate(1242.80,748.00) rotate(-45)">Aug 7, 2025</text><line x1="1280.80" x2="1280.80" y1="736" y2="742" stroke="#e0e0e0" stroke-width="1"/><text class="xl" text-anchor="end" textLength="57.28" lengthAdjust="spacingAndGlyphs" transform="translate(1284.40,748.00) rotate(-45)">Aug 9, 2025</text><line x1="1322.40" x2="1322.40" y1="736" y2="742" stroke="#e0e0e0" stroke-width="1"/><text class="xl" text-anchor="end" textLength="62.40" lengthAdjust="spacingAndGlyphs" transform="translate(1326.00,748.00) rotate(-45)">Aug 11, 2025</text><line x1="1364.00" x2="1364.00" y1="736" y2="742" stroke="#e0e0e0" stroke-width="1"/><text class="xl" text-anchor="end" textLength="63.19" lengthAdjust="spacingAndGlyphs" transform="translate(1367.60,748.00) rotate(-45)">Aug 13, 2025</text></svg>
<div class="abs" style="left:20px;top:668px;width:160px;height:56px;border-radius:28px;background:#1570e6;box-shadow:0 2px 8px rgba(0,0,0,0.25);z-index:10"></div>
<svg class="abs" style="left:40px;top:680px;z-index:11" width="32" height="32" viewBox="0 0 32 32"><path d="M4.5 2.4 H27.5 C28.6 2.4 29.5 3.3 29.5 4.4 V21.5 C29.5 22.6 28.6 23.5 27.5 23.5 H9.4 L2.4 29.2 V4.4 C2.4 3.3 3.3 2.4 4.5 2.4 Z" fill="#fff"/></svg>
<div class="t" style="left:501.00px;top:17.30px;font-size:13px;color:#202124;transform:scaleX(0.8835);">CRO Tools</div>
<div class="t" style="left:580.70px;top:17.30px;font-size:13px;color:#202124;transform:scaleX(0.8604);">SERP Checker</div>
<div class="t" style="left:680.00px;top:17.30px;font-size:13px;color:#202124;transform:scaleX(0.9073);">Backlinks by Semrush</div>
<div class="t" style="left:820.70px;top:17.30px;font-size:13px;color:#202124;transform:scaleX(0.8776);">AI SEO Analyzer</div>
<div class="t" style="left:912.30px;top:17.64px;font-size:12px;color:#fff;-webkit-text-stroke:0.15px #fff;">new</div>
<div class="t" style="left:68.10px;top:57.91px;font-size:23.5px;color:#1b1b1f;font-weight:bold;transform:scaleX(0.9447);">plerdy</div>
<div class="t" style="left:186.25px;top:64.50px;font-size:15px;color:#202124;transform:scaleX(0.9220);">plerdy.com - 278</div>
<div class="t" style="left:383.60px;top:63.90px;font-size:15px;color:#fff;-webkit-text-stroke:0.3px #fff;transform:scaleX(0.9040);">Upgrade</div>
<div class="t" style="left:480.30px;top:63.90px;font-size:15px;color:#3c4043;transform:scaleX(0.9133);">Enterprise-5 Plan, till Jan 12, 2030</div>
<div class="t" style="left:1169.70px;top:63.90px;font-size:15px;color:#5f6368;transform:scaleX(0.9611);">Notifications</div>
<div class="t" style="left:1288.70px;top:63.90px;font-size:15px;color:#202124;transform:scaleX(0.9263);">Support</div>
<div class="t" style="left:36.30px;top:133.58px;font-size:24px;color:#202124;">Heatmaps</div>
<div class="t" style="left:56.00px;top:196.72px;font-size:12.5px;color:#5f6368;transform:scaleX(0.9701);">Total Clicks</div>
<div class="t" style="left:178.30px;top:196.72px;font-size:12.5px;color:#5f6368;transform:scaleX(0.9460);">Desktop</div>
<div class="t" style="left:271.00px;top:196.72px;font-size:12.5px;color:#5f6368;transform:scaleX(0.9779);">Mobile</div>
<div class="t" style="left:369.30px;top:196.72px;font-size:12.5px;color:#5f6368;transform:scaleX(0.9708);">Tablet</div>
<div class="t" style="left:56.00px;top:216.06px;font-size:18px;color:#111;-webkit-text-stroke:0.5px #111;transform:scaleX(1.0042);">176.2K</div>
<div class="t" style="left:189.30px;top:216.06px;font-size:18px;color:#111;-webkit-text-stroke:0.5px #111;transform:scaleX(0.9921);">149K</div>
<div class="t" style="left:282.00px;top:216.06px;font-size:18px;color:#111;-webkit-text-stroke:0.5px #111;transform:scaleX(1.0049);">26.7K</div>
<div class="t" style="left:380.00px;top:216.06px;font-size:18px;color:#111;-webkit-text-stroke:0.5px #111;transform:scaleX(1.0213);">495</div>
<div class="t" style="left:56.25px;top:533.92px;font-size:12.5px;color:#5f6368;transform:scaleX(0.9459);">User sessions</div>
<div class="t" style="left:56.25px;top:553.51px;font-size:18px;color:#111;-webkit-text-stroke:0.5px #111;transform:scaleX(0.9849);">49,452</div>
<div class="t" style="left:191.25px;top:533.92px;font-size:12.5px;color:#5f6368;transform:scaleX(0.9682);">Sessions without clicks</div>
<div class="t" style="left:202.00px;top:553.51px;font-size:18px;color:#111;-webkit-text-stroke:0.5px #111;transform:scaleX(0.9760);">26,025 (53%)</div>
<div class="t" style="left:751.25px;top:533.92px;font-size:12.5px;color:#5f6368;transform:scaleX(0.9459);">User sessions</div>
<div class="t" style="left:751.25px;top:553.51px;font-size:18px;color:#111;-webkit-text-stroke:0.5px #111;transform:scaleX(0.9849);">49,452</div>
<div class="t" style="left:886.25px;top:533.92px;font-size:12.5px;color:#5f6368;transform:scaleX(0.9451);">Sessions that were only on one page</div>
<div class="t" style="left:897.00px;top:553.51px;font-size:18px;color:#111;-webkit-text-stroke:0.5px #111;transform:scaleX(0.9714);">39,037 (79%)</div>
<div class="t" style="left:80.00px;top:687.33px;font-size:16.5px;color:#fff;font-weight:bold;transform:scaleX(0.8984);z-index:11;">Need help?</div>
</body></html>
